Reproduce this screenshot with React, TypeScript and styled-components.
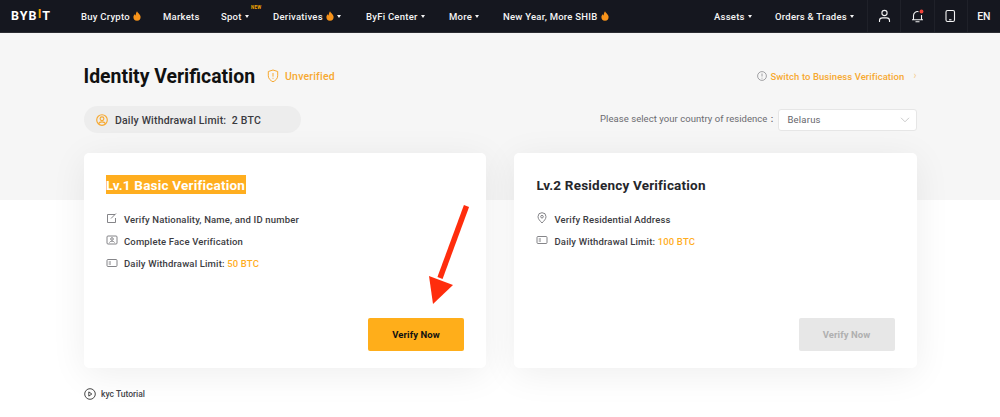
import React from "react";
import styled, { createGlobalStyle } from "styled-components";

const Global = createGlobalStyle`
  html, body { margin: 0; padding: 0; background: #fff; }
  body { font-family: Roboto, "Liberation Sans", sans-serif; width: 1000px; height: 417px; overflow: hidden; }
  * { box-sizing: border-box; }
`;

const Page = styled.div`
  position: relative;
  width: 1000px;
  height: 417px;
  overflow: hidden;
  background: #fff;
`;

const Header = styled.header`
  display: flex;
  align-items: stretch;
  height: 33px;
  background: #15171f;
  border-bottom: 1px solid #2b2d33;
  color: #f4f4f4;
`;

const Logo = styled.div`
  width: 81px;
  padding: 8px 0 0 11px;
  font-size: 12.5px;
  line-height: 16px;
  font-weight: 700;
  letter-spacing: 1.1px;
  color: #fff;
  span { color: #f7a600; font-weight: 700; position: relative; top: -2px; }
`;

const NavItem = styled.div<{ $w: number }>`
  display: flex;
  align-items: center;
  gap: 3px;
  width: ${(p) => p.$w}px;
  position: relative;
  font-size: 9.5px;
  font-weight: 500;
  letter-spacing: 0.25px;
  white-space: nowrap;
`;

const Caret = styled.i`
  display: inline-block;
  width: 0;
  height: 0;
  margin-top: 1px;
  border-left: 2.5px solid transparent;
  border-right: 2.5px solid transparent;
  border-top: 3.5px solid #f4f4f4;
`;

const NewBadge = styled.b`
  position: absolute;
  left: 30px;
  top: 5px;
  font-size: 4.5px;
  font-weight: 700;
  color: #f7a600;
`;

const Spacer = styled.div`
  flex: 1;
`;

const IconCell = styled.div<{ $text?: boolean }>`
  width: 33.25px;
  display: flex;
  align-items: center;
  justify-content: center;
  border-left: 1px solid #1f2129;
  font-size: ${(p) => (p.$text ? "10.5px" : "9.5px")};
  font-weight: 500;
`;

const Band = styled.div`
  height: 167px;
  background: #f6f6f6;
`;

const Main = styled.main`
  position: absolute;
  top: 33px;
  left: 83.5px;
  width: 833px;
`;

const TitleRow = styled.div`
  display: flex;
  align-items: center;
  height: 44px;
  margin-top: 21px;
`;

const Title = styled.h1`
  margin: 2px 12px 0 0;
  font-size: 19.4px;
  line-height: 24px;
  font-weight: 700;
  color: #111;
  letter-spacing: 0;
`;

const Status = styled.span`
  margin-left: 6px;
  font-size: 10.5px;
  font-weight: 500;
  color: #f7a931;
  letter-spacing: 0.2px;
`;

const SwitchLink = styled.a`
  margin-left: auto;
  display: flex;
  align-items: center;
  gap: 3px;
  font-size: 9.5px;
  font-weight: 500;
  color: #f7a931;
  letter-spacing: 0.07px;
`;

const Chevron = styled.span`
  margin-left: 6px;
  color: #f5cf96;
  font-size: 10px;
  line-height: 10px;
`;

const FilterRow = styled.div`
  display: flex;
  align-items: center;
  height: 27px;
  margin-top: 8px;
`;

const LimitPill = styled.div`
  display: flex;
  align-items: center;
  gap: 7px;
  width: 217px;
  height: 27px;
  padding: 1px 0 0 12.5px;
  border-radius: 14px;
  background: #ededed;
  font-size: 10.5px;
  font-weight: 500;
  letter-spacing: 0.18px;
  color: #3a3a3f;
  white-space: pre;
`;

const CountryLabel = styled.span`
  margin-left: auto;
  font-size: 9.5px;
  letter-spacing: 0.05px;
  color: #6b6b70;
`;

const Select = styled.div`
  display: flex;
  align-items: center;
  justify-content: space-between;
  width: 139px;
  height: 22px;
  padding: 0 6px 0 9px;
  border: 1px solid #e6e6e6;
  border-radius: 3px;
  background: #fff;
  font-size: 9.5px;
  letter-spacing: 0.2px;
  color: #66666b;
`;

const Cards = styled.div`
  display: flex;
  gap: 28px;
  margin-top: 20px;
`;

const Card = styled.section`
  flex: 1;
  display: flex;
  flex-direction: column;
  height: 215px;
  padding: 22px 22px 17px 22px;
  background: #fff;
  border-radius: 5px;
  box-shadow: 0 6px 36px rgba(0, 0, 0, 0.07);
`;

const CardTitle = styled.h2<{ $active?: boolean }>`
  align-self: flex-start;
  margin: 0 0 14px;
  padding: 1px 0.5px 0;
  height: 19px;
  font-size: 13.5px;
  line-height: 19px;
  font-weight: 700;
  letter-spacing: 0.2px;
  color: ${(p) => (p.$active ? "#fff" : "#25262b")};
  background: ${(p) => (p.$active ? "#ffae1f" : "transparent")};
`;

const Feature = styled.div`
  display: flex;
  align-items: center;
  gap: 6.5px;
  height: 22.3px;
  font-size: 9.5px;
  font-weight: 500;
  letter-spacing: 0.16px;
  color: #3c3c42;
  svg { flex: none; margin-top: -2px; }
`;

const Hl = styled.span`
  color: #ffae1f;
`;

const VerifyBtn = styled.button<{ $off?: boolean }>`
  align-self: flex-end;
  width: 96px;
  height: 33px;
  margin-top: auto;
  border: 0;
  border-radius: 2px;
  font-family: inherit;
  font-size: 9.5px;
  font-weight: 700;
  letter-spacing: 0.1px;
  background: ${(p) => (p.$off ? "#e7e7e7" : "#ffae1a")};
  color: ${(p) => (p.$off ? "#b0b0b0" : "#111")};
`;

const Tutorial = styled.div`
  display: flex;
  align-items: center;
  gap: 5.5px;
  margin-top: 20px;
  font-size: 8.5px;
  font-weight: 500;
  color: #44444a;
`;

const ArrowOverlay = styled.svg`
  position: absolute;
  left: 425px;
  top: 200px;
`;

const Flame = () => (
  <svg width="8" height="10" viewBox="0 0 8 10">
    <path d="M4 .3c.4 1.6 3.6 3 3.6 5.7A3.6 3.7 0 0 1 .4 6c0-1.3.7-2.2 1.4-2.8.1.7.4 1.1.8 1.2C2.700 3 3.200 1.400 4 .3z" fill="#f7931a" />
  </svg>
);

const Line = ({ children }: { children: React.ReactNode }) => (
  <svg width="12" height="12" viewBox="0 0 12 12" fill="none" stroke="#77777c" strokeWidth="0.9">
    {children}
  </svg>
);

export default function App() {
  return (
    <Page>
      <Global />
      <Header>
        <Logo>
          BYB<span>I</span>T
        </Logo>
        <NavItem $w={82}>
          Buy Crypto <Flame />
        </NavItem>
        <NavItem $w={58}>Markets</NavItem>
        <NavItem $w={52}>
          Spot <Caret />
          <NewBadge>NEW</NewBadge>
        </NavItem>
        <NavItem $w={93}>
          Derivatives <Flame /> <Caret />
        </NavItem>
        <NavItem $w={83}>
          ByFi Center <Caret />
        </NavItem>
        <NavItem $w={54}>
          More <Caret />
        </NavItem>
        <NavItem $w={130}>
          New Year, More SHIB <Flame />
        </NavItem>
        <Spacer />
        <NavItem $w={61}>
          Assets <Caret />
        </NavItem>
        <NavItem $w={92}>
          Orders &amp; Trades <Caret />
        </NavItem>
        <IconCell>
          <svg width="13" height="14" viewBox="0 0 13 14" fill="none" stroke="#f4f4f4" strokeWidth="1.1">
            <circle cx="6.5" cy="4" r="2.6" />
            <path d="M1.500 13v-1.500c0-1.600 1.300-2.600 3-2.600h4c1.700 0 3 1 3 2.600V13" />
          </svg>
        </IconCell>
        <IconCell>
          <svg width="13" height="14" viewBox="0 0 13 14" fill="none">
            <path d="M2.500 10.500V6.500A4 4 0 0 1 7.500 2.700M10.500 6v4.500M1 10.800h11M4.500 12.800h4" stroke="#f4f4f4" strokeWidth="1.100" />
            <circle cx="10.500" cy="2.500" r="1.900" fill="#f0443a" />
          </svg>
        </IconCell>
        <IconCell>
          <svg width="11" height="14" viewBox="0 0 11 14" fill="none" stroke="#f4f4f4" strokeWidth="1.100">
            <rect x="1" y="1.500" width="8.500" height="11" rx="1.500" />
            <path d="M4 10.800h2.500" />
          </svg>
        </IconCell>
        <IconCell $text>EN</IconCell>
      </Header>
      <Band />
      <Main>
        <TitleRow>
          <Title>Identity Verification</Title>
          <svg width="12" height="14" viewBox="0 0 12 14" fill="none" stroke="#f7a931" strokeWidth="1">
            <path d="M6 1l4.700 1.500v4.300c0 2.900-2.300 4.900-4.700 6-2.400-1.100-4.700-3.100-4.700-6V2.500z" />
            <path d="M6 4v3.600M6 8.800v1" />
          </svg>
          <Status>Unverified</Status>
          <SwitchLink>
            <svg width="10" height="10" viewBox="0 0 10 10" fill="none" stroke="#8b8b8f" strokeWidth="0.8">
              <circle cx="5" cy="5" r="4.400" />
              <path d="M5 2.500v3M5 6.700v.9" />
            </svg>
            Switch to Business Verification
            <Chevron>›</Chevron>
          </SwitchLink>
        </TitleRow>
        <FilterRow>
          <LimitPill>
            <svg width="12" height="12" viewBox="0 0 12 12" fill="none" stroke="#f7a931" strokeWidth="1.150">
              <circle cx="6" cy="6" r="5.300" />
              <circle cx="6" cy="4.700" r="1.900" />
              <path d="M2.500 9.800c.6-1.500 2-2 3.500-2s2.900.5 3.500 2" />
            </svg>
            Daily Withdrawal Limit:  2 BTC
          </LimitPill>
          <CountryLabel>Please select your country of residence：</CountryLabel>
          <Select>
            Belarus
            <svg width="10" height="6" viewBox="0 0 10 6" fill="none" stroke="#c4c4c4" strokeWidth="0.9">
              <path d="M1 .8l4 4 4-4" />
            </svg>
          </Select>
        </FilterRow>
        <Cards>
          <Card>
            <CardTitle $active>Lv.1 Basic Verification</CardTitle>
            <Feature>
              <Line>
                <path d="M9 2.500H1.500v8h8V6M5 6.500L10 1.500" />
              </Line>
              Verify Nationality, Name, and ID number
            </Feature>
            <Feature>
              <Line>
                <rect x="1" y="2" width="10" height="8" rx="1" />
                <circle cx="6" cy="5" r="1.300" />
                <path d="M3.500 8.500c.4-1 1.400-1.200 2.500-1.200s2.100.2 2.500 1.200" />
              </Line>
              Complete Face Verification
            </Feature>
            <Feature>
              <Line>
                <rect x="1" y="2.500" width="10" height="7" rx="1" />
                <path d="M2.700 5h2.300M2.700 7h2.300" />
              </Line>
              <span>
                Daily Withdrawal Limit: <Hl>50 BTC</Hl>
              </span>
            </Feature>
            <VerifyBtn>Verify Now</VerifyBtn>
          </Card>
          <Card>
            <CardTitle>Lv.2 Residency Verification</CardTitle>
            <Feature>
              <Line>
                <path d="M6 11C4 8.800 2 7 2 4.700a4 4 0 0 1 8 0C10 7 8 8.800 6 11z" />
                <circle cx="6" cy="4.700" r="1.300" />
              </Line>
              Verify Residential Address
            </Feature>
            <Feature>
              <Line>
                <rect x="1" y="2.500" width="10" height="7" rx="1" />
                <path d="M2.700 5h2.300M2.700 7h2.300" />
              </Line>
              <span>
                Daily Withdrawal Limit: <Hl>100 BTC</Hl>
              </span>
            </Feature>
            <VerifyBtn $off>Verify Now</VerifyBtn>
          </Card>
        </Cards>
        <Tutorial>
          <svg width="12" height="12" viewBox="0 0 12 12" fill="none" stroke="#333" strokeWidth="0.9">
            <circle cx="6" cy="6" r="5.300" />
            <path d="M4.800 3.900l3 2.100-3 2.100z" />
          </svg>
          kyc Tutorial
        </Tutorial>
      </Main>
      <ArrowOverlay width="46" height="106" viewBox="0 0 46 106" fill="none">
        <path d="M41.500 6L15 78" stroke="#ff2d0d" strokeWidth="5.500" />
        <path d="M4 76L28 85L8 104z" fill="#ff2d0d" />
      </ArrowOverlay>
    </Page>
  );
}
